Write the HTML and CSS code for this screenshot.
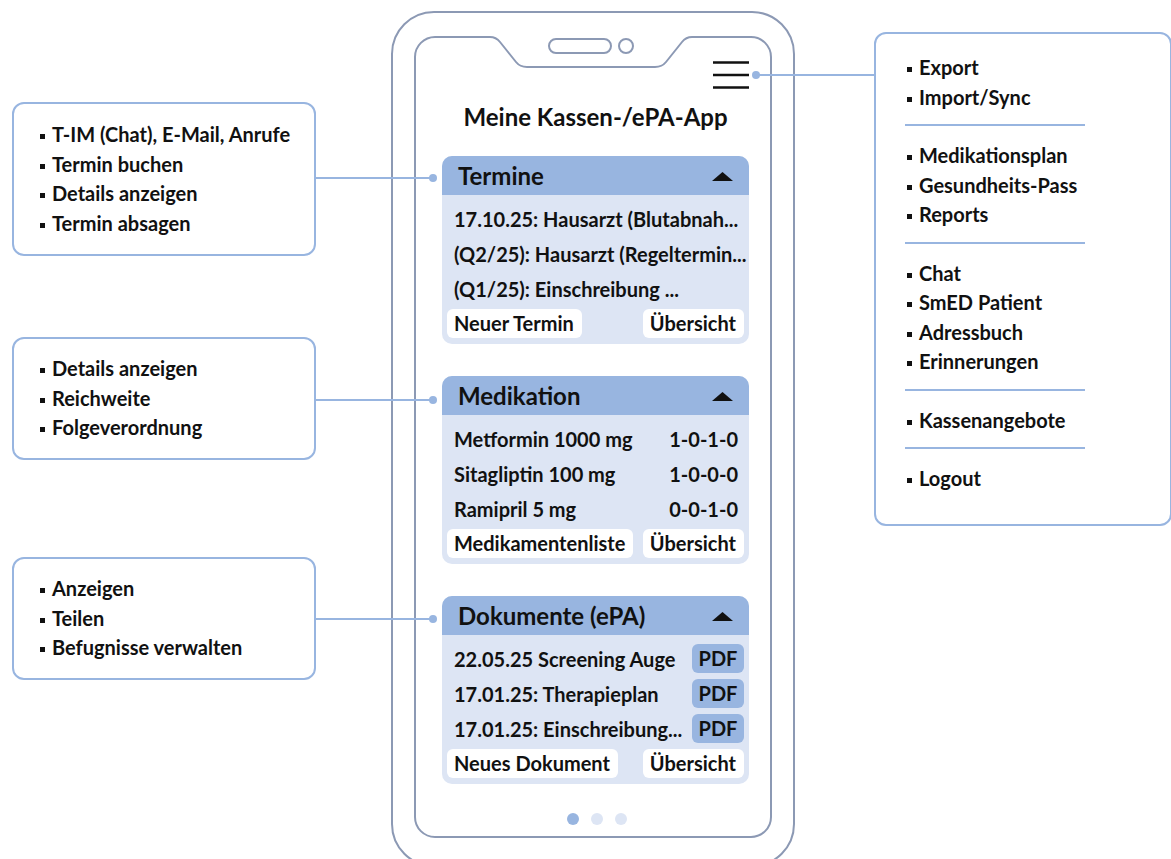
FILE: index.html
```html
<!DOCTYPE html>
<html lang="de">
<head>
    <meta charset="UTF-8">
    <title>Meine Kassen-/ePA-App</title>
    <link rel="stylesheet" href="styles.css">
</head>
<body>
<div class="canvas">
    <!-- phone frame and connector lines -->
    <svg class="wires" width="1171" height="859" viewBox="0 0 1171 859">
        <g class="phone-frame">
            <rect x="392" y="12" width="402" height="854" rx="42"/>
            <path d="M415,57 A20,20 0 0 1 435,37 L490,37 Q496,37 500,42 L516,62 Q520,67 527,67 L655,67 Q662,67 666,62 L682,42 Q686,37 692,37 L751,37 A20,20 0 0 1 771,57 L771,817 A20,20 0 0 1 751,837 L435,837 A20,20 0 0 1 415,817 Z"/>
            <rect x="549" y="39" width="62" height="14" rx="7"/>
            <circle cx="626" cy="46" r="7"/>
        </g>
        <g class="links">
            <line x1="315" y1="178" x2="433" y2="178"/>
            <line x1="315" y1="400" x2="433" y2="400"/>
            <line x1="315" y1="619" x2="433" y2="619"/>
            <line x1="756" y1="75" x2="875" y2="75"/>
        </g>
        <g class="link-dots">
            <circle cx="433" cy="178" r="4"/>
            <circle cx="433" cy="400" r="4"/>
            <circle cx="433" cy="619" r="4"/>
            <circle cx="756" cy="75" r="4"/>
        </g>
    </svg>

    <!-- callouts left -->
    <ul class="note note-termine">
        <li>T-IM (Chat), E-Mail, Anrufe</li>
        <li>Termin buchen</li>
        <li>Details anzeigen</li>
        <li>Termin absagen</li>
    </ul>
    <ul class="note note-medikation">
        <li>Details anzeigen</li>
        <li>Reichweite</li>
        <li>Folgeverordnung</li>
    </ul>
    <ul class="note note-dokumente">
        <li>Anzeigen</li>
        <li>Teilen</li>
        <li>Befugnisse verwalten</li>
    </ul>

    <!-- menu callout right -->
    <div class="note note-menu">
        <ul>
            <li>Export</li>
            <li>Import/Sync</li>
        </ul>
        <hr>
        <ul>
            <li>Medikationsplan</li>
            <li>Gesundheits-Pass</li>
            <li>Reports</li>
        </ul>
        <hr>
        <ul>
            <li>Chat</li>
            <li>SmED Patient</li>
            <li>Adressbuch</li>
            <li>Erinnerungen</li>
        </ul>
        <hr>
        <ul>
            <li>Kassenangebote</li>
        </ul>
        <hr>
        <ul>
            <li>Logout</li>
        </ul>
    </div>

    <!-- phone screen -->
    <div class="screen">
        <div class="topbar">
            <svg class="burger" width="36" height="28" viewBox="0 0 36 28">
                <line x1="0" y1="1.5" x2="36" y2="1.5"/>
                <line x1="0" y1="14" x2="36" y2="14"/>
                <line x1="0" y1="26.5" x2="36" y2="26.5"/>
            </svg>
        </div>
        <h1 class="app-title">Meine Kassen-/ePA-App</h1>

        <section class="card">
            <div class="card-head">
                <span>Termine</span>
                <svg class="caret" width="21" height="9" viewBox="0 0 21 9"><polygon points="0,9 10.5,0 21,9"/></svg>
            </div>
            <div class="card-body">
                <div class="row">17.10.25: Hausarzt (Blutabnah...</div>
                <div class="row">(Q2/25): Hausarzt (Regeltermin...</div>
                <div class="row">(Q1/25): Einschreibung ...</div>
                <div class="actions">
                    <span class="pill">Neuer Termin</span>
                    <span class="pill">Übersicht</span>
                </div>
            </div>
        </section>

        <section class="card">
            <div class="card-head">
                <span>Medikation</span>
                <svg class="caret" width="21" height="9" viewBox="0 0 21 9"><polygon points="0,9 10.5,0 21,9"/></svg>
            </div>
            <div class="card-body">
                <div class="row"><span>Metformin 1000 mg</span><span>1-0-1-0</span></div>
                <div class="row"><span>Sitagliptin 100 mg</span><span>1-0-0-0</span></div>
                <div class="row"><span>Ramipril 5 mg</span><span>0-0-1-0</span></div>
                <div class="actions">
                    <span class="pill">Medikamentenliste</span>
                    <span class="pill">Übersicht</span>
                </div>
            </div>
        </section>

        <section class="card">
            <div class="card-head">
                <span>Dokumente (ePA)</span>
                <svg class="caret" width="21" height="9" viewBox="0 0 21 9"><polygon points="0,9 10.5,0 21,9"/></svg>
            </div>
            <div class="card-body">
                <div class="row doc"><span>22.05.25 Screening Auge</span><span class="badge">PDF</span></div>
                <div class="row doc"><span>17.01.25: Therapieplan</span><span class="badge">PDF</span></div>
                <div class="row doc"><span>17.01.25: Einschreibung...</span><span class="badge">PDF</span></div>
                <div class="actions">
                    <span class="pill">Neues Dokument</span>
                    <span class="pill">Übersicht</span>
                </div>
            </div>
        </section>

        <div class="pager">
            <span class="dot active"></span>
            <span class="dot"></span>
            <span class="dot"></span>
        </div>
    </div>
</div>
</body>
</html>
```

FILE: styles.css
```css
body {
    margin: 0;
    background: #ffffff;
    font-family: 'Lato', 'Liberation Sans', sans-serif;
    font-weight: 700;
    color: #111111;
}
.canvas {
    position: relative;
    width: 1171px;
    height: 859px;
    overflow: hidden;
}
.wires {
    position: absolute;
    left: 0;
    top: 0;
}
.phone-frame {
    fill: none;
    stroke: #8c99b4;
    stroke-width: 2;
}
.links line {
    stroke: #98b5e0;
    stroke-width: 2;
}
.link-dots circle {
    fill: #98b5e0;
}

/* callout boxes */
.note {
    position: absolute;
    box-sizing: border-box;
    margin: 0;
    background: #ffffff;
    border: 2px solid #98b5e0;
    border-radius: 12px;
    font-size: 20px;
    line-height: 29.5px;
}
ul.note {
    list-style: none;
    padding: 0 0 0 26px;
    display: flex;
    flex-direction: column;
    justify-content: center;
}
.note li::before {
    content: "";
    display: inline-block;
    width: 5px;
    height: 5px;
    background: #111111;
    margin-right: 7px;
    vertical-align: 3px;
}
.note-termine {
    left: 12px;
    top: 102px;
    width: 304px;
    height: 154px;
}
.note-medikation {
    left: 12px;
    top: 337px;
    width: 304px;
    height: 123px;
}
.note-dokumente {
    left: 12px;
    top: 557px;
    width: 304px;
    height: 123px;
}
.note-menu {
    left: 874px;
    top: 32px;
    width: 298px;
    height: 494px;
    padding: 19px 0 0 29px;
}
.note-menu ul {
    list-style: none;
    margin: 0;
    padding: 0 0 0 2px;
}
.note-menu hr {
    width: 180px;
    margin: 12px 0 15px 0;
    border: none;
    height: 2px;
    background: #98b5e0;
}

/* phone screen */
.screen {
    position: absolute;
    left: 415px;
    top: 37px;
    width: 356px;
    height: 800px;
    box-sizing: border-box;
    padding: 24px 22px 0 27px;
}
.topbar {
    display: flex;
    justify-content: flex-end;
    height: 28px;
}
.burger line {
    stroke: #111111;
    stroke-width: 2.6;
}
.app-title {
    margin: 13px 0 25px 0;
    font-size: 24px;
    line-height: 29px;
    font-weight: 700;
    text-align: center;
}
.card {
    border-radius: 10px;
    overflow: hidden;
    background: #dde5f4;
    margin-bottom: 32px;
}
.card-head {
    display: flex;
    justify-content: space-between;
    align-items: center;
    height: 39px;
    padding: 0 16px;
    background: #98b5e0;
    font-size: 24px;
}
.caret {
    fill: #111111;
    margin-top: 1px;
}
.card-body {
    padding: 6px 5px 6px 12px;
    font-size: 20px;
}
.row {
    display: flex;
    justify-content: space-between;
    align-items: center;
    height: 35px;
    padding-right: 6px;
    white-space: nowrap;
}
.row.doc {
    padding-right: 0;
}
.badge {
    display: inline-block;
    width: 52px;
    height: 29px;
    line-height: 29px;
    text-align: center;
    border-radius: 6px;
    background: #98b5e0;
}
.actions {
    display: flex;
    justify-content: space-between;
    margin: 3px 0 0 -7px;
}
.pill {
    height: 29px;
    line-height: 29px;
    padding: 0 8px 0 7px;
    border-radius: 6px;
    background: #ffffff;
}
.pager {
    display: flex;
    justify-content: center;
    gap: 12px;
    margin-top: -3px;
    padding-left: 2px;
}
.dot {
    width: 12px;
    height: 12px;
    border-radius: 50%;
    background: #dde5f4;
}
.dot.active {
    background: #98b5e0;
}
```
